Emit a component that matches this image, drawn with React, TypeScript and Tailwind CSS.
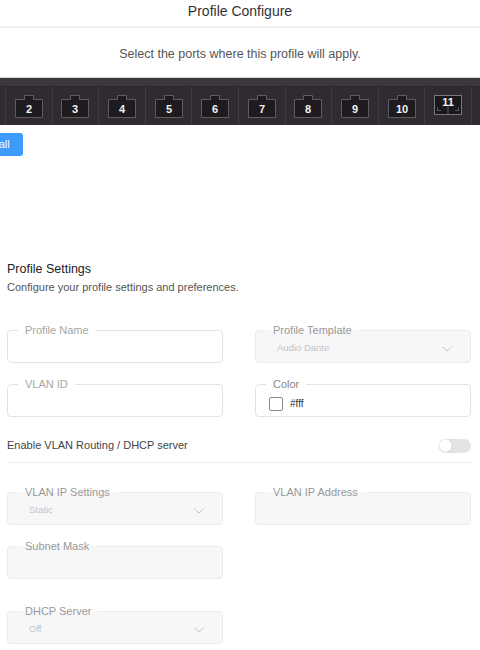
import React from "react";

const FONT = "font-['Liberation_Sans',Arial,sans-serif]";

function Chevron() {
  return (
    <svg width="10" height="6" viewBox="0 0 10 6" className="shrink-0">
      <polyline points="0.5,0.8 5,5 9.5,0.8" fill="none" stroke="#c6c6c6" strokeWidth="1" />
    </svg>
  );
}

function Field({
  label,
  disabled,
  labelClass = "text-[#a6a6a6]",
  children,
}: {
  label: string;
  disabled?: boolean;
  labelClass?: string;
  children?: React.ReactNode;
}) {
  return (
    <fieldset
      className={`h-[39px] rounded-[4px] border ${
        disabled ? "border-[#ebebeb] bg-[#f7f7f9]" : "border-[#e3e3e3] bg-white"
      }`}
    >
      <legend className={`ml-[10px] px-[7px] text-[11px] leading-[13px] ${labelClass}`}>{label}</legend>
      <div className="flex h-[25px] items-center pb-[2px]">{children}</div>
    </fieldset>
  );
}

function SelectContent({ value }: { value: string }) {
  return (
    <div className="flex w-full items-center justify-between pl-[21px] pr-[18px]">
      <span className="text-[9.5px] text-[#c4c4c4]">{value}</span>
      <Chevron />
    </div>
  );
}

function Port({ n }: { n: number }) {
  if (n === 11) {
    return (
      <svg width="28" height="20" viewBox="0 0 28 20" className="-mt-[3px]">
        <rect x="0.5" y="0.5" width="27" height="19" fill="#1b181c" stroke="#7a777b" />
        <line x1="14" y1="11" x2="14" y2="19.5" stroke="#5e5b5f" />
        <polyline points="3.5,12 3.5,15.5 7,15.5" fill="none" stroke="#5e5b5f" />
        <polyline points="24.5,12 24.5,15.5 21,15.5" fill="none" stroke="#5e5b5f" />
        <text
          x="14"
          y="10.5"
          textAnchor="middle"
          fontFamily="Liberation Sans, Arial, sans-serif"
          fontWeight="700"
          fontSize="11"
          fill="#f2f2f2"
        >
          {n}
        </text>
      </svg>
    );
  }
  return (
    <svg width="28" height="23" viewBox="0 0 28 23">
      <path
        d="M0.5 4.5 H9.5 V0.5 H18.5 V4.5 H27.5 V22.5 H0.5 Z"
        fill="#1e1b1f"
        stroke="#5f5c60"
        strokeWidth="1"
      />
      <text
        x="14"
        y="17.5"
        textAnchor="middle"
        fontFamily="Liberation Sans, Arial, sans-serif"
        fontWeight="700"
        fontSize="11"
        fill="#f2f2f2"
      >
        {n}
      </text>
    </svg>
  );
}

export default function App() {
  const ports = [1, 2, 3, 4, 5, 6, 7, 8, 9, 10, 11, 12];
  return (
    <div className={`w-[480px] min-h-[650px] overflow-hidden bg-white ${FONT}`}>
      {/* Header */}
      <div className="flex h-[28px] items-center justify-center border-b-2 border-[#efefef] pb-[3px] text-[14px] text-[#333]">
        Profile Configure
      </div>
      <div className="flex h-[49px] items-center justify-center pt-[4px] text-[12.5px] text-[#555]">
        Select the ports where this profile will apply.
      </div>

      {/* Port panel */}
      <div className="border-t border-[#d4d4d4]">
        <div className="h-[9px] border-b border-[#2a272b] bg-[#3b373c]" />
        <div className="flex h-[38px] bg-[#2f2b30]">
          <div className="-ml-[40.5px] flex">
            {ports.map((p) => (
              <div
                key={p}
                className="flex h-[38px] w-[46.6px] shrink-0 items-center justify-center border-r border-[#403c41]"
              >
                {p >= 2 && p <= 11 ? <Port n={p} /> : null}
              </div>
            ))}
          </div>
        </div>
      </div>

      {/* Button */}
      <div className="mt-[8px] -ml-[47px] flex">
        <button className="h-[23px] rounded-[3px] bg-[#3c9bfb] pl-[12px] pr-[13px] text-[11px] text-white">
          Select all
        </button>
      </div>

      {/* Settings */}
      <div className="mt-[106px] pl-[7px] pr-[9px]">
        <div className="text-[12.5px] leading-[15px] text-[#222]">Profile Settings</div>
        <div className="mt-[4px] text-[11px] leading-[13px] text-[#555]">
          Configure your profile settings and preferences.
        </div>

        <div className="mt-[30px] grid grid-cols-2 gap-x-[32px] gap-y-[15px]">
          <Field label="Profile Name" />
          <Field label="Profile Template" disabled labelClass="text-[#999]">
            <SelectContent value="Audio Dante" />
          </Field>
          <Field label="VLAN ID" />
          <Field label="Color" labelClass="text-[#888]">
            <div className="flex items-center gap-[7px] pl-[13px] pt-[2px]">
              <span className="h-[14px] w-[14px] rounded-[2px] border border-[#8a8a8a] bg-white" />
              <span className="text-[10px] text-[#333]">#fff</span>
            </div>
          </Field>
        </div>

        <div className="mt-[20px] flex h-[17px] items-center justify-between">
          <span className="text-[11px] text-[#444]">Enable VLAN Routing / DHCP server</span>
          <span className="flex h-[14px] w-[32px] items-center rounded-full bg-[#e3e3e3]">
            <span className="h-[13px] w-[13px] rounded-full bg-white shadow-[0_0_1px_rgba(0,0,0,0.35)]" />
          </span>
        </div>
        <div className="mt-[8px] border-b border-[#ececec]" />

        <div className="mt-[23px] grid grid-cols-2 gap-x-[32px] gap-y-[15px]">
          <Field label="VLAN IP Settings" disabled labelClass="text-[#999]">
            <SelectContent value="Static" />
          </Field>
          <Field label="VLAN IP Address" disabled labelClass="text-[#999]" />
          <Field label="Subnet Mask" disabled labelClass="text-[#999]" />
          <div />
        </div>

        <div className="mt-[26px] grid grid-cols-2 gap-x-[32px]">
          <Field label="DHCP Server" disabled labelClass="text-[#999]">
            <SelectContent value="Off" />
          </Field>
          <div />
        </div>
      </div>
    </div>
  );
}
